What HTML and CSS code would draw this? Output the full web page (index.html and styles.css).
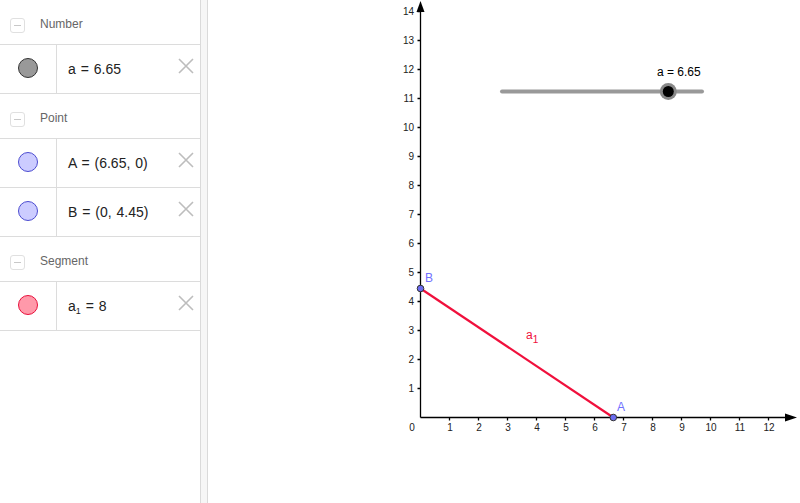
FILE: index.html
```html
<!DOCTYPE html>
<html>
<head>
<meta charset="utf-8">
<link rel="stylesheet" href="styles.css">
</head>
<body>
<div class="app">
  <div class="algebra">
    <div class="group-header"><span class="collapse"><span class="minus"></span></span><span class="group-label">Number</span></div>
    <div class="item">
      <div class="marble-cell"><span class="marble marble-num"></span></div>
      <div class="formula">a = 6.65</div>
      <svg class="close" viewBox="0 0 16 16"><path d="M1 1 L15 15 M15 1 L1 15"/></svg>
    </div>
    <div class="group-header"><span class="collapse"><span class="minus"></span></span><span class="group-label">Point</span></div>
    <div class="item">
      <div class="marble-cell"><span class="marble marble-pt"></span></div>
      <div class="formula">A = (6.65, 0)</div>
      <svg class="close" viewBox="0 0 16 16"><path d="M1 1 L15 15 M15 1 L1 15"/></svg>
    </div>
    <div class="item">
      <div class="marble-cell"><span class="marble marble-pt"></span></div>
      <div class="formula">B = (0, 4.45)</div>
      <svg class="close" viewBox="0 0 16 16"><path d="M1 1 L15 15 M15 1 L1 15"/></svg>
    </div>
    <div class="group-header"><span class="collapse"><span class="minus"></span></span><span class="group-label">Segment</span></div>
    <div class="item">
      <div class="marble-cell"><span class="marble marble-seg"></span></div>
      <div class="formula">a<sub>1</sub> = 8</div>
      <svg class="close" viewBox="0 0 16 16"><path d="M1 1 L15 15 M15 1 L1 15"/></svg>
    </div>
  </div>
  <div class="divider"></div>
  <div class="graphics">
    <svg class="canvas" width="592" height="503" viewBox="208 0 592 503">
      <g class="axes">
        <line x1="420.5" y1="417.5" x2="420.5" y2="6"/>
        <line x1="420.5" y1="417.5" x2="791" y2="417.5"/>
        <polygon points="420.5,1 416.5,12 424.5,12"/>
        <polygon points="797,417.5 785,413.5 785,421.5"/>
        <path class="ticks" d="M449.5 417.5v3M478.5 417.5v3M507.5 417.5v3M536.5 417.5v3M565.5 417.5v3M594.5 417.5v3M623.5 417.5v3M652.5 417.5v3M681.5 417.5v3M710.5 417.5v3M739.5 417.5v3M768.5 417.5v3
          M420.5 388.5h-3M420.5 359.5h-3M420.5 330.5h-3M420.5 301.5h-3M420.5 272.5h-3M420.5 243.5h-3M420.5 214.5h-3M420.5 185.5h-3M420.5 156.5h-3M420.5 127.5h-3M420.5 98.5h-3M420.5 69.5h-3M420.5 40.5h-3M420.5 11.5h-3"/>
      </g>
      <g class="tick-labels xl">
        <text x="412" y="431">0</text>
        <text x="450" y="431">1</text>
        <text x="479" y="431">2</text>
        <text x="508" y="431">3</text>
        <text x="537" y="431">4</text>
        <text x="566" y="431">5</text>
        <text x="595" y="431">6</text>
        <text x="624" y="431">7</text>
        <text x="653" y="431">8</text>
        <text x="682" y="431">9</text>
        <text x="711" y="431">10</text>
        <text x="740" y="431">11</text>
        <text x="769" y="431">12</text>
      </g>
      <g class="tick-labels yl">
        <text x="414" y="392">1</text>
        <text x="414" y="363">2</text>
        <text x="414" y="334">3</text>
        <text x="414" y="305">4</text>
        <text x="414" y="276">5</text>
        <text x="414" y="247">6</text>
        <text x="414" y="218">7</text>
        <text x="414" y="189">8</text>
        <text x="414" y="160">9</text>
        <text x="414" y="131">10</text>
        <text x="414" y="102">11</text>
        <text x="414" y="73">12</text>
        <text x="414" y="44">13</text>
        <text x="414" y="15">14</text>
      </g>
      <line class="segment" x1="420.5" y1="288.5" x2="613.3" y2="417.5"/>
      <text class="seg-label" x="526" y="339">a<tspan class="sub" dy="4">1</tspan></text>
      <circle class="pt" cx="420.5" cy="288.5" r="3.3"/>
      <circle class="pt" cx="613.3" cy="417.5" r="3.3"/>
      <text class="pt-label" x="425" y="282">B</text>
      <text class="pt-label" x="617" y="411">A</text>
      <g class="slider">
        <line class="slider-line" x1="502" y1="91.5" x2="702" y2="91.5"/>
        <circle class="knob-ring" cx="668.3" cy="91.5" r="8.5"/>
        <circle class="knob" cx="668.3" cy="91.5" r="5.5"/>
        <text class="slider-label" x="657" y="76">a = 6.65</text>
      </g>
    </svg>
  </div>
</div>
</body>
</html>
```
FILE: styles.css
```css
html, body {
  margin: 0;
  padding: 0;
  background: #fff;
}
.app {
  display: flex;
  width: 800px;
  height: 503px;
  overflow: hidden;
  font-family: "Liberation Sans", Arial, sans-serif;
}
.algebra {
  width: 200px;
  flex: none;
  display: flex;
  flex-direction: column;
}
.group-header {
  height: 40px;
  padding-top: 4px;
  border-bottom: 1px solid #dcdcdc;
  display: flex;
  align-items: center;
  padding-left: 10px;
  box-sizing: content-box;
}
.collapse {
  width: 13px;
  height: 13px;
  border: 1px solid #e0e0e0;
  border-radius: 3px;
  display: flex;
  align-items: center;
  justify-content: center;
  margin-top: 2px;
}
.minus {
  width: 7px;
  height: 1px;
  background: #c8c8c8;
}
.group-label {
  margin-left: 15px;
  font-size: 12px;
  color: #666;
}
.item {
  height: 48px;
  border-bottom: 1px solid #dcdcdc;
  display: flex;
  align-items: center;
}
.marble-cell {
  width: 56px;
  height: 100%;
  border-right: 1px solid #dcdcdc;
  display: flex;
  align-items: center;
  justify-content: center;
  flex: none;
}
.marble {
  width: 18px;
  height: 18px;
  border-radius: 50%;
  margin-bottom: 3px;
}
.marble-num {
  background: #999;
  border: 1px solid #333;
}
.marble-pt {
  background: #ccccff;
  border: 1px solid #4c4cd0;
}
.marble-seg {
  background: #ff99aa;
  border: 1px solid #e8103c;
}
.formula {
  padding-left: 11px;
  font-size: 14px;
  color: #222;
  word-spacing: 1px;
}
.formula sub {
  font-size: 9px;
  vertical-align: -3px;
  line-height: 0;
}
.close {
  margin-left: auto;
  margin-right: 6px;
  margin-bottom: 6px;
  width: 16px;
  height: 16px;
  flex: none;
}
.close path {
  stroke: #bdbdbd;
  stroke-width: 1.6;
  fill: none;
}
.divider {
  width: 6px;
  flex: none;
  background: #f6f6f6;
  border-left: 1px solid #dadada;
  border-right: 1px solid #dadada;
}
.graphics {
  flex: 1;
  position: relative;
}
.canvas {
  display: block;
}
.axes line, .ticks {
  stroke: #000;
  stroke-width: 1.3;
  fill: none;
}
.axes polygon {
  fill: #000;
}
.tick-labels text {
  font-family: "Liberation Sans", Arial, sans-serif;
  font-size: 10px;
  fill: #222;
}
.xl text {
  text-anchor: middle;
}
.yl text {
  text-anchor: end;
}
.segment {
  stroke: #f0103c;
  stroke-width: 2.2;
}
.seg-label {
  font-family: "Liberation Sans", Arial, sans-serif;
  font-size: 12px;
  fill: #f0103c;
}
.seg-label .sub {
  font-size: 10px;
}
.pt {
  fill: #6b6bf0;
  stroke: #333;
  stroke-width: 1;
}
.pt-label {
  font-family: "Liberation Sans", Arial, sans-serif;
  font-size: 12px;
  fill: #7070ff;
}
.slider-line {
  stroke: #999;
  stroke-width: 4;
  stroke-linecap: round;
}
.knob-ring {
  fill: #888;
}
.knob {
  fill: #000;
}
.slider-label {
  font-family: "Liberation Sans", Arial, sans-serif;
  font-size: 12px;
  fill: #000;
}
```
